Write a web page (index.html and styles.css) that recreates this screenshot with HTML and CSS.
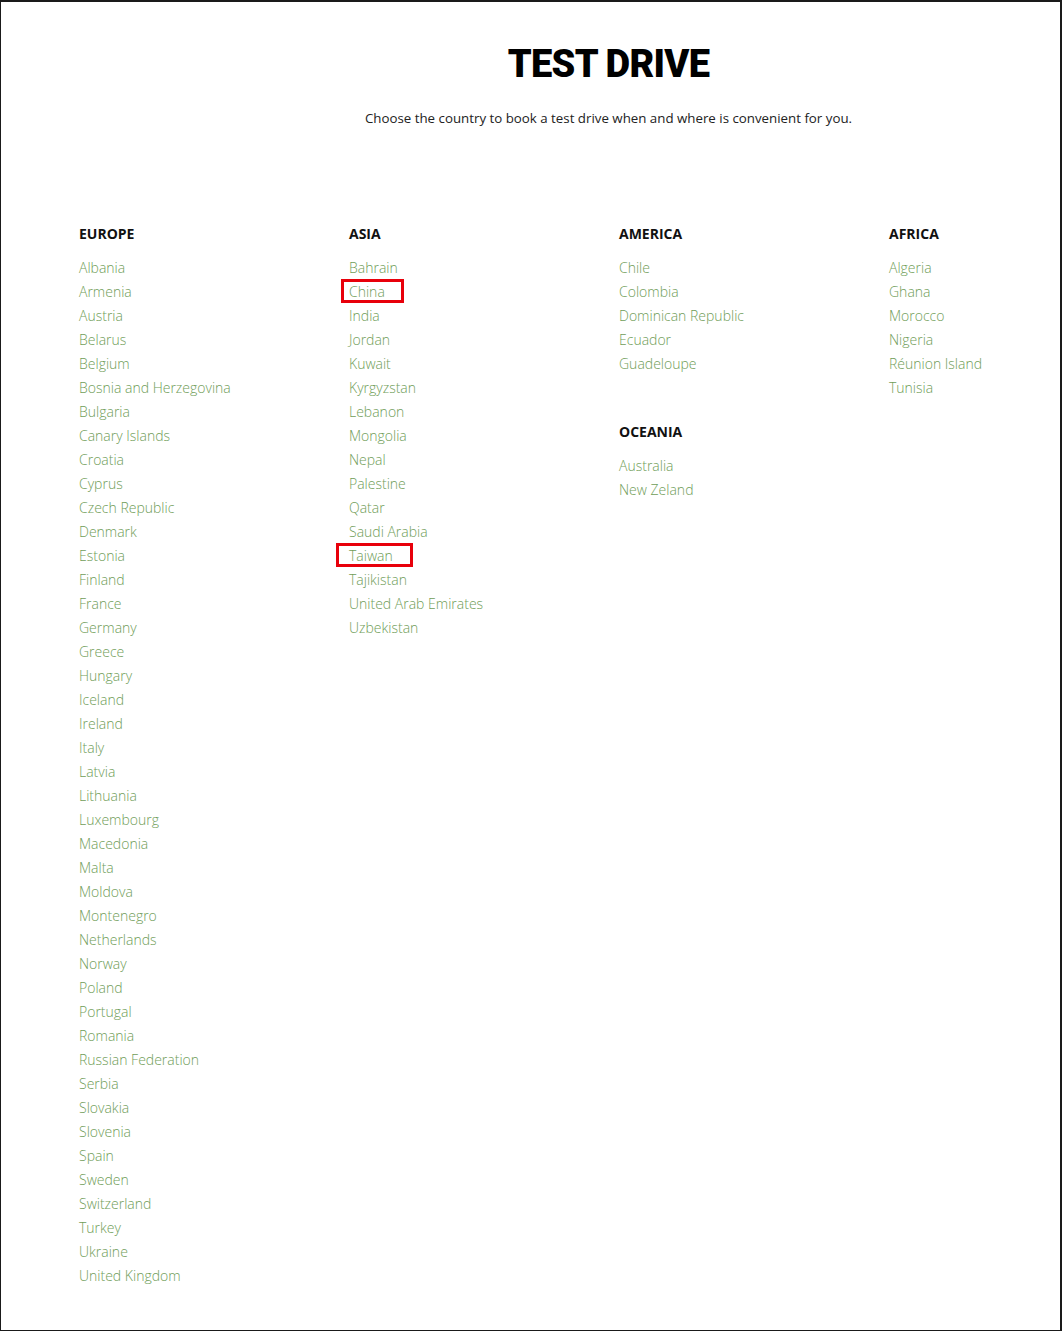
FILE: index.html
```html
<!DOCTYPE html>
<html lang="en">
<head>
<meta charset="UTF-8">
<title>Test Drive</title>
<link rel="stylesheet" href="styles.css">
</head>
<body>

<div class="page">
    <div class="intro">
        <h1>TEST DRIVE</h1>
        <p>Choose the country to book a test drive when and where is convenient for you.</p>
    </div>

    <div class="regions">
        <div class="region-col">
            <div class="region">
                <h3>EUROPE</h3>
                <ul>
                    <li><a href="#">Albania</a></li>
                    <li><a href="#">Armenia</a></li>
                    <li><a href="#">Austria</a></li>
                    <li><a href="#">Belarus</a></li>
                    <li><a href="#">Belgium</a></li>
                    <li><a href="#">Bosnia and Herzegovina</a></li>
                    <li><a href="#">Bulgaria</a></li>
                    <li><a href="#">Canary Islands</a></li>
                    <li><a href="#">Croatia</a></li>
                    <li><a href="#">Cyprus</a></li>
                    <li><a href="#">Czech Republic</a></li>
                    <li><a href="#">Denmark</a></li>
                    <li><a href="#">Estonia</a></li>
                    <li><a href="#">Finland</a></li>
                    <li><a href="#">France</a></li>
                    <li><a href="#">Germany</a></li>
                    <li><a href="#">Greece</a></li>
                    <li><a href="#">Hungary</a></li>
                    <li><a href="#">Iceland</a></li>
                    <li><a href="#">Ireland</a></li>
                    <li><a href="#">Italy</a></li>
                    <li><a href="#">Latvia</a></li>
                    <li><a href="#">Lithuania</a></li>
                    <li><a href="#">Luxembourg</a></li>
                    <li><a href="#">Macedonia</a></li>
                    <li><a href="#">Malta</a></li>
                    <li><a href="#">Moldova</a></li>
                    <li><a href="#">Montenegro</a></li>
                    <li><a href="#">Netherlands</a></li>
                    <li><a href="#">Norway</a></li>
                    <li><a href="#">Poland</a></li>
                    <li><a href="#">Portugal</a></li>
                    <li><a href="#">Romania</a></li>
                    <li><a href="#">Russian Federation</a></li>
                    <li><a href="#">Serbia</a></li>
                    <li><a href="#">Slovakia</a></li>
                    <li><a href="#">Slovenia</a></li>
                    <li><a href="#">Spain</a></li>
                    <li><a href="#">Sweden</a></li>
                    <li><a href="#">Switzerland</a></li>
                    <li><a href="#">Turkey</a></li>
                    <li><a href="#">Ukraine</a></li>
                    <li><a href="#">United Kingdom</a></li>
                </ul>
            </div>
        </div>

        <div class="region-col">
            <div class="region">
                <h3>ASIA</h3>
                <ul>
                    <li><a href="#">Bahrain</a></li>
                    <li class="marked mark-china"><a href="#">China</a></li>
                    <li><a href="#">India</a></li>
                    <li><a href="#">Jordan</a></li>
                    <li><a href="#">Kuwait</a></li>
                    <li><a href="#">Kyrgyzstan</a></li>
                    <li><a href="#">Lebanon</a></li>
                    <li><a href="#">Mongolia</a></li>
                    <li><a href="#">Nepal</a></li>
                    <li><a href="#">Palestine</a></li>
                    <li><a href="#">Qatar</a></li>
                    <li><a href="#">Saudi Arabia</a></li>
                    <li class="marked mark-taiwan"><a href="#">Taiwan</a></li>
                    <li><a href="#">Tajikistan</a></li>
                    <li><a href="#">United Arab Emirates</a></li>
                    <li><a href="#">Uzbekistan</a></li>
                </ul>
            </div>
        </div>

        <div class="region-col">
            <div class="region">
                <h3>AMERICA</h3>
                <ul>
                    <li><a href="#">Chile</a></li>
                    <li><a href="#">Colombia</a></li>
                    <li><a href="#">Dominican Republic</a></li>
                    <li><a href="#">Ecuador</a></li>
                    <li><a href="#">Guadeloupe</a></li>
                </ul>
            </div>
            <div class="region">
                <h3>OCEANIA</h3>
                <ul>
                    <li><a href="#">Australia</a></li>
                    <li><a href="#">New Zeland</a></li>
                </ul>
            </div>
        </div>

        <div class="region-col">
            <div class="region">
                <h3>AFRICA</h3>
                <ul>
                    <li><a href="#">Algeria</a></li>
                    <li><a href="#">Ghana</a></li>
                    <li><a href="#">Morocco</a></li>
                    <li><a href="#">Nigeria</a></li>
                    <li><a href="#">Réunion Island</a></li>
                    <li><a href="#">Tunisia</a></li>
                </ul>
            </div>
        </div>
    </div>
</div>

</body>
</html>
```

FILE: styles.css
```css
html, body {
    margin: 0;
    padding: 0;
    background: #fff;
}
body {
    font-family: "Open Sans", "Liberation Sans", sans-serif;
    color: #222;
    overflow: hidden;
}
.page {
    box-sizing: border-box;
    width: 1062px;
    height: 1331px;
    border: 1px solid #1a1a1a;
    border-top-width: 2px;
    border-right-width: 2px;
}
.intro {
    padding: 38px 0 0 156px;
    text-align: center;
}
.intro h1 {
    margin: 0;
    font-family: Roboto, "Liberation Sans", sans-serif;
    font-weight: 900;
    font-size: 38px;
    line-height: 48px;
    letter-spacing: -0.7px;
    color: #000;
}
.intro p {
    margin: 20px 0 0;
    font-size: 13.3px;
    line-height: 20px;
    color: #222;
}
.regions {
    display: grid;
    grid-template-columns: 270px 270px 270px 1fr;
    padding: 94px 0 0 78px;
}
.region {
    margin-bottom: 44px;
}
.region h3 {
    margin: 0 0 10px;
    font-size: 14px;
    font-weight: 700;
    line-height: 24px;
    color: #111;
}
.region ul {
    list-style: none;
    margin: 0;
    padding: 0;
}
.region li {
    font-size: 14px;
    font-weight: 300;
    line-height: 24px;
}
.region li a {
    color: #6f9d58;
    text-decoration: none;
}
.marked {
    position: relative;
}
.marked::after {
    content: "";
    position: absolute;
    top: -1px;
    height: 18px;
    border: 3px solid #e8000b;
}
.mark-china::after {
    left: -8px;
    width: 57px;
}
.mark-taiwan::after {
    left: -13px;
    width: 71px;
}
```
